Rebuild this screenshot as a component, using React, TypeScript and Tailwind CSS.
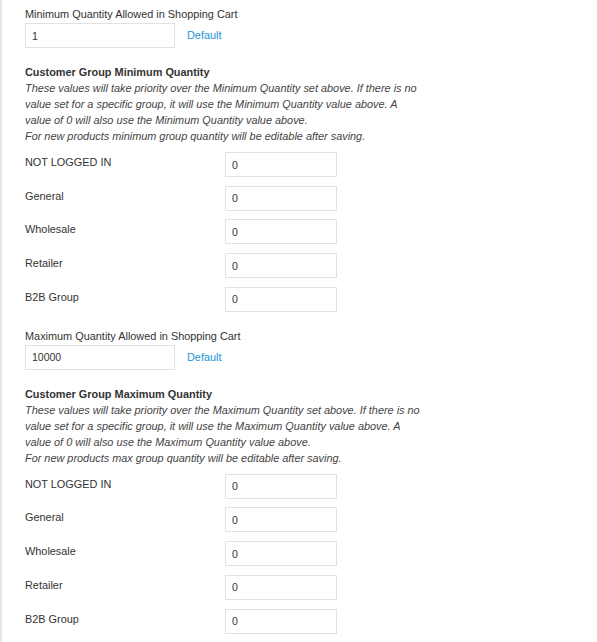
const groups = ['NOT LOGGED IN', 'General', 'Wholesale', 'Retailer', 'B2B Group'];

type SectionProps = {
  kind: 'Minimum' | 'Maximum';
  value: string;
  short: string;
};

function QuantitySection({ kind, value, short }: SectionProps) {
  return (
    <div className="pt-[6px] pb-[10px]">
      <p className="text-[10.9px] leading-[16px] text-[#333]">{kind} Quantity Allowed in Shopping Cart</p>
      <div className="mt-[1px] flex items-center">
        <input
          type="text"
          defaultValue={value}
          className="h-[25px] w-[150px] border border-[#e2e2e2] bg-white px-[6px] text-[10.5px] text-[#333] outline-none"
        />
        <a href="#" className="ml-[12px] mb-[1px] text-[10.9px] leading-[16px] text-[#1a95d5]">
          Default
        </a>
      </div>

      <h3 className="mt-[16px] text-[10.9px] font-bold leading-[16px] text-[#333]">Customer Group {kind} Quantity</h3>
      <p className="text-[10.9px] italic leading-[16px] text-[#444]">
        These values will take priority over the {kind} Quantity set above. If there is no
        <br />
        value set for a specific group, it will use the {kind} Quantity value above. A
        <br />
        value of 0 will also use the {kind} Quantity value above.
        <br />
        For new products {short} group quantity will be editable after saving.
      </p>

      <div className="mt-[8px] flex flex-col gap-[8.7px]">
        {groups.map((g) => (
          <div key={g} className="grid grid-cols-[200px_112px]">
            <span className="pt-[2px] text-[10.9px] leading-[16px] text-[#333]">{g}</span>
            <input
              type="text"
              defaultValue="0"
              className="h-[25px] w-[112px] border border-[#e2e2e2] bg-white px-[6px] text-[10.5px] text-[#333] outline-none"
            />
          </div>
        ))}
      </div>
    </div>
  );
}

export default function App() {
  return (
    <div className="min-h-screen border-l-2 border-[#e6e6e6] bg-white pl-[23px] font-['Liberation_Sans',Arial,sans-serif]">
      <QuantitySection kind="Minimum" value="1" short="minimum" />
      <QuantitySection kind="Maximum" value="10000" short="max" />
    </div>
  );
}
